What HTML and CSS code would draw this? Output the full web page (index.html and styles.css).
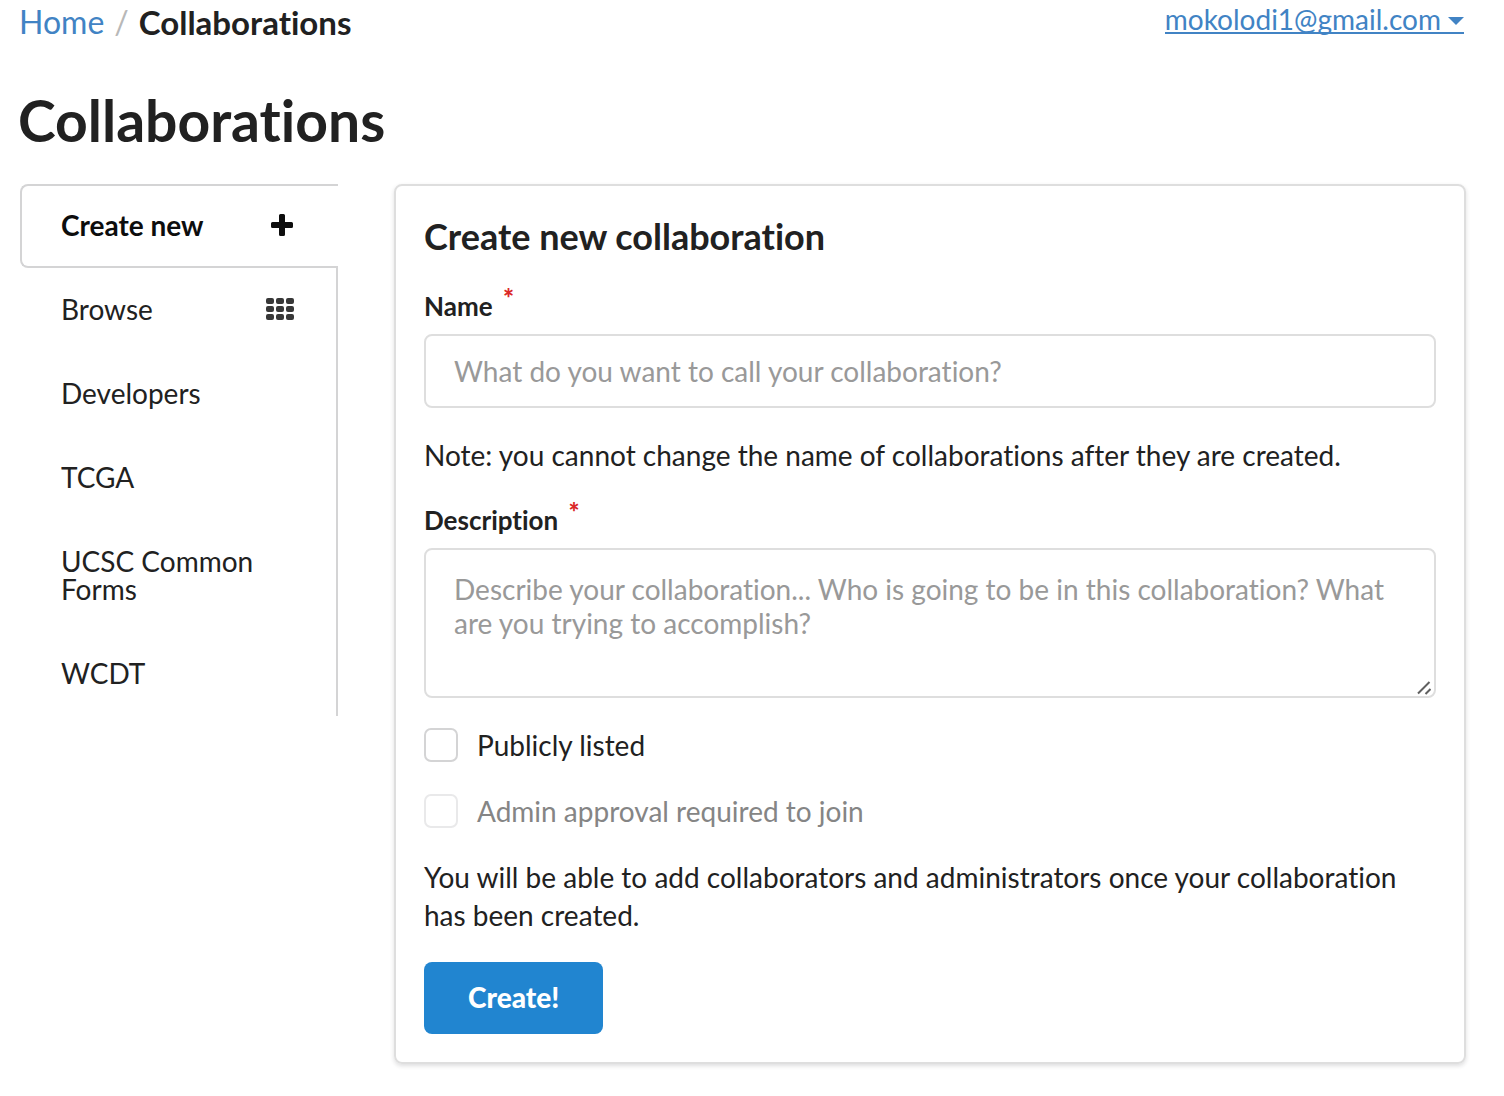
FILE: index.html
```html
<!DOCTYPE html>
<html lang="en">
<head>
  <meta charset="utf-8">
  <meta name="viewport" content="width=device-width, initial-scale=1">
  <title>Collaborations</title>
  <link rel="stylesheet" href="styles.css">
</head>
<body>
  <div class="page">
    <header class="topbar">
      <nav class="breadcrumb" aria-label="Breadcrumb">
        <a class="breadcrumb-link" href="#home">Home</a>
        <span class="breadcrumb-divider">/</span>
        <span class="breadcrumb-current">Collaborations</span>
      </nav>
      <button class="account" type="button">
        <span>mokolodi1@gmail.com</span>
        <svg class="account-caret" viewBox="0 0 16 12" aria-hidden="true"><path d="M0 4H16L8 12Z"/></svg>
      </button>
    </header>

    <h1 class="page-title">Collaborations</h1>

    <div class="columns">
      <nav class="menu" aria-label="Collaborations">
        <a class="menu-item menu-item-active" href="#create">
          <span>Create new</span>
          <svg class="menu-icon" viewBox="0 0 32 28" aria-hidden="true"><path d="M9.500 3H12.500Q14 3 14 4.500V11H20.500Q22 11 22 12.500V15.500Q22 17 20.500 17H14V23.500Q14 25 12.500 25H9.500Q8 25 8 23.500V17H1.500Q0 17 0 15.500V12.500Q0 11 1.500 11H8V4.500Q8 3 9.500 3Z" transform="translate(5)"/></svg>
        </a>
        <a class="menu-item" href="#browse">
          <span>Browse</span>
          <svg class="menu-icon menu-icon-soft" viewBox="0 0 32 28" aria-hidden="true">
            <rect x="0" y="3" width="8" height="6" rx="2"/><rect x="10" y="3" width="8" height="6" rx="2"/><rect x="20" y="3" width="8" height="6" rx="2"/>
            <rect x="0" y="11" width="8" height="6" rx="2"/><rect x="10" y="11" width="8" height="6" rx="2"/><rect x="20" y="11" width="8" height="6" rx="2"/>
            <rect x="0" y="19" width="8" height="6" rx="2"/><rect x="10" y="19" width="8" height="6" rx="2"/><rect x="20" y="19" width="8" height="6" rx="2"/>
          </svg>
        </a>
        <a class="menu-item" href="#developers">Developers</a>
        <a class="menu-item" href="#tcga">TCGA</a>
        <a class="menu-item" href="#ucsc">UCSC Common Forms</a>
        <a class="menu-item" href="#wcdt">WCDT</a>
      </nav>

      <main class="card">
        <form class="form">
          <h2 class="form-title">Create new collaboration</h2>

          <label class="field-label" for="name">Name <span class="required">*</span></label>
          <input class="control" id="name" type="text" placeholder="What do you want to call your collaboration?">

          <p class="text">Note: you cannot change the name of collaborations after they are created.</p>

          <label class="field-label" for="description">Description <span class="required">*</span></label>
          <div class="area">
            <textarea class="control control-area" id="description" placeholder="Describe your collaboration... Who is going to be in this collaboration? What are you trying to accomplish?"></textarea>
            <svg class="area-grip" viewBox="0 0 14 14" aria-hidden="true"><path d="M1 12.500L12.500 1M8.500 13L13.500 8"/></svg>
          </div>

          <div class="check">
            <input class="check-box" id="public" type="checkbox">
            <label class="check-label" for="public">Publicly listed</label>
          </div>
          <div class="check check-disabled">
            <input class="check-box" id="approval" type="checkbox" disabled>
            <label class="check-label" for="approval">Admin approval required to join</label>
          </div>

          <p class="text text-last">You will be able to add collaborators and administrators once your collaboration has been created.</p>

          <button class="submit" type="submit">Create!</button>
        </form>
      </main>
    </div>
  </div>
</body>
</html>
```
FILE: styles.css
```css
* {
  box-sizing: border-box;
}

body {
  margin: 0;
  background: #fff;
  color: #212121;
  font: 28px/38px Lato, sans-serif;
  font-variant-ligatures: none;
}

.page {
  padding: 0 38px 32px 20px;
}

.topbar {
  display: flex;
  justify-content: space-between;
  align-items: flex-start;
  margin: 0 2px 0 -1px;
}

.breadcrumb {
  display: flex;
  gap: 10px;
  padding-top: 2px;
  font-size: 32px;
  line-height: 40px;
}

.breadcrumb-link {
  color: #4183c4;
  text-decoration: none;
}

.breadcrumb-divider {
  color: #b8b8b8;
}

.breadcrumb-current {
  font-size: 33px;
  font-weight: 700;
}

.account {
  display: flex;
  align-items: center;
  gap: 7px;
  margin-top: 6px;
  padding: 0;
  border: 0;
  border-bottom: 2px solid #4183c4;
  background: none;
  color: #4183c4;
  font: inherit;
  font-variant-ligatures: none;
  line-height: 26px;
}

.account-caret {
  width: 16px;
  height: 12px;
  fill: currentColor;
}

.page-title {
  margin: 42px 0 28px -2px;
  font-size: 57px;
  font-weight: 700;
  line-height: 72px;
}

.columns {
  display: grid;
  grid-template-columns: 318px minmax(0, 1fr);
  gap: 56px;
  align-items: start;
}

.menu {
  border-right: 2px solid #d4d4d5;
}

.menu-item {
  display: flex;
  justify-content: space-between;
  padding: 27px 38px 29px 41px;
  color: #212121;
  line-height: 28px;
  text-decoration: none;
}

.menu-item-active {
  margin-right: -2px;
  padding: 25px 40px 27px 39px;
  border: 2px solid #d4d4d5;
  border-right: 0;
  border-radius: 8px 0 0 8px;
  background: #fff;
  color: #0d0d0d;
  font-weight: 700;
}

.menu-icon {
  width: 32px;
  height: 28px;
  flex: none;
  fill: currentColor;
}

.menu-icon-soft {
  fill: #383838;
}

.card {
  padding: 28px;
  border: 2px solid #dedede;
  border-radius: 8px;
  box-shadow: 0 2px 4px rgba(34, 36, 38, 0.15);
}

.form {
  display: flex;
  flex-direction: column;
}

.form-title {
  margin: 0 0 35px;
  font-size: 36px;
  font-weight: 700;
  line-height: 44px;
}

.field-label {
  margin-bottom: 15px;
  font-size: 26px;
  font-weight: 700;
  line-height: 26px;
}

.required {
  margin-left: 4px;
  color: #db2828;
  font-weight: 900;
  line-height: 0;
  vertical-align: 8px;
}

.control {
  display: block;
  width: 100%;
  height: 74px;
  padding: 0 28px;
  border: 2px solid #dedede;
  border-radius: 8px;
  background: #fff;
  color: #212121;
  font: inherit;
  font-variant-ligatures: none;
}

.control::placeholder {
  color: #999;
  opacity: 1;
}

.area {
  position: relative;
  margin-bottom: 30px;
}

.control-area {
  height: 150px;
  padding: 22px 28px;
  line-height: 34px;
  resize: none;
}

.area-grip {
  position: absolute;
  right: 5px;
  bottom: 3px;
  width: 14px;
  height: 14px;
  fill: none;
  stroke: #606060;
  stroke-width: 2;
}

.text {
  margin: 28px 0 33px;
}

.text-last {
  margin: 30px 0 28px;
}

.check {
  display: flex;
  align-items: center;
  gap: 19px;
  margin-bottom: 32px;
}

.check-box {
  width: 34px;
  height: 34px;
  flex: none;
  margin: 0;
  border: 2px solid #d4d4d5;
  border-radius: 7px;
  appearance: none;
  background: #fff;
}

.check-box:checked {
  background: #2185d0;
}

.check-label {
  line-height: 34px;
}

.check-disabled {
  margin-bottom: 0;
}

.check-disabled .check-box {
  border-color: #e9e9ea;
}

.check-disabled .check-label {
  color: #858585;
}

.submit {
  align-self: flex-start;
  height: 72px;
  padding: 0 44px 2px;
  border: 0;
  border-radius: 8px;
  background: #2185d0;
  color: #fff;
  font: inherit;
  font-weight: 900;
}
```
